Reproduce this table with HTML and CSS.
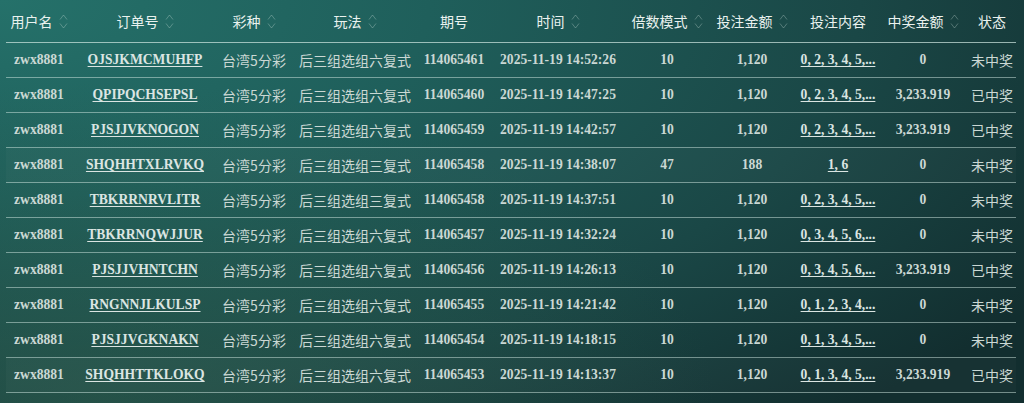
FILE: index.html
```html
<!DOCTYPE html>
<html lang="zh">
<head>
<meta charset="utf-8">
<title>投注记录</title>
<link rel="stylesheet" href="styles.css">
</head>
<body>
<div class="wrap">
<table class="bets">
<colgroup>
<col class="c-user"><col class="c-order"><col class="c-lottery"><col class="c-play"><col class="c-issue"><col class="c-time"><col class="c-mult"><col class="c-amount"><col class="c-content"><col class="c-win"><col class="c-status">
</colgroup>
<thead>
<tr>
<th>用户名<svg class="sort" viewBox="0 0 9 17"><path d="M1 6.5 L4.5 2 L8 6.5 M1 10.5 L4.5 15 L8 10.5"/></svg></th>
<th>订单号<svg class="sort" viewBox="0 0 9 17"><path d="M1 6.5 L4.5 2 L8 6.5 M1 10.5 L4.5 15 L8 10.5"/></svg></th>
<th>彩种<svg class="sort" viewBox="0 0 9 17"><path d="M1 6.5 L4.5 2 L8 6.5 M1 10.5 L4.5 15 L8 10.5"/></svg></th>
<th>玩法<svg class="sort" viewBox="0 0 9 17"><path d="M1 6.5 L4.5 2 L8 6.5 M1 10.5 L4.5 15 L8 10.5"/></svg></th>
<th>期号</th>
<th>时间<svg class="sort" viewBox="0 0 9 17"><path d="M1 6.5 L4.5 2 L8 6.5 M1 10.5 L4.5 15 L8 10.5"/></svg></th>
<th>倍数模式<svg class="sort" viewBox="0 0 9 17"><path d="M1 6.5 L4.5 2 L8 6.5 M1 10.5 L4.5 15 L8 10.5"/></svg></th>
<th>投注金额<svg class="sort" viewBox="0 0 9 17"><path d="M1 6.5 L4.5 2 L8 6.5 M1 10.5 L4.5 15 L8 10.5"/></svg></th>
<th>投注内容</th>
<th>中奖金额<svg class="sort" viewBox="0 0 9 17"><path d="M1 6.5 L4.5 2 L8 6.5 M1 10.5 L4.5 15 L8 10.5"/></svg></th>
<th>状态</th>
</tr>
</thead>
<tbody>
<tr><td class="num">zwx8881</td><td class="num"><a class="link">OJSJKMCMUHFP</a></td><td class="cn">台湾5分彩</td><td class="cn">后三组选组六复式</td><td class="num">114065461</td><td class="num">2025-11-19 14:52:26</td><td class="num">10</td><td class="num">1,120</td><td class="num"><a class="link">0, 2, 3, 4, 5,...</a></td><td class="num">0</td><td class="cn">未中奖</td></tr>
<tr><td class="num">zwx8881</td><td class="num"><a class="link">QPIPQCHSEPSL</a></td><td class="cn">台湾5分彩</td><td class="cn">后三组选组六复式</td><td class="num">114065460</td><td class="num">2025-11-19 14:47:25</td><td class="num">10</td><td class="num">1,120</td><td class="num"><a class="link">0, 2, 3, 4, 5,...</a></td><td class="num">3,233.919</td><td class="cn">已中奖</td></tr>
<tr><td class="num">zwx8881</td><td class="num"><a class="link">PJSJJVKNOGON</a></td><td class="cn">台湾5分彩</td><td class="cn">后三组选组六复式</td><td class="num">114065459</td><td class="num">2025-11-19 14:42:57</td><td class="num">10</td><td class="num">1,120</td><td class="num"><a class="link">0, 2, 3, 4, 5,...</a></td><td class="num">3,233.919</td><td class="cn">已中奖</td></tr>
<tr class="hl"><td class="num">zwx8881</td><td class="num"><a class="link">SHQHHTXLRVKQ</a></td><td class="cn">台湾5分彩</td><td class="cn">后三组选组三复式</td><td class="num">114065458</td><td class="num">2025-11-19 14:38:07</td><td class="num">47</td><td class="num">188</td><td class="num"><a class="link">1, 6</a></td><td class="num">0</td><td class="cn">未中奖</td></tr>
<tr><td class="num">zwx8881</td><td class="num"><a class="link">TBKRRNRVLITR</a></td><td class="cn">台湾5分彩</td><td class="cn">后三组选组三复式</td><td class="num">114065458</td><td class="num">2025-11-19 14:37:51</td><td class="num">10</td><td class="num">1,120</td><td class="num"><a class="link">0, 2, 3, 4, 5,...</a></td><td class="num">0</td><td class="cn">未中奖</td></tr>
<tr><td class="num">zwx8881</td><td class="num"><a class="link">TBKRRNQWJJUR</a></td><td class="cn">台湾5分彩</td><td class="cn">后三组选组六复式</td><td class="num">114065457</td><td class="num">2025-11-19 14:32:24</td><td class="num">10</td><td class="num">1,120</td><td class="num"><a class="link">0, 3, 4, 5, 6,...</a></td><td class="num">0</td><td class="cn">未中奖</td></tr>
<tr><td class="num">zwx8881</td><td class="num"><a class="link">PJSJJVHNTCHN</a></td><td class="cn">台湾5分彩</td><td class="cn">后三组选组六复式</td><td class="num">114065456</td><td class="num">2025-11-19 14:26:13</td><td class="num">10</td><td class="num">1,120</td><td class="num"><a class="link">0, 3, 4, 5, 6,...</a></td><td class="num">3,233.919</td><td class="cn">已中奖</td></tr>
<tr><td class="num">zwx8881</td><td class="num"><a class="link">RNGNNJLKULSP</a></td><td class="cn">台湾5分彩</td><td class="cn">后三组选组六复式</td><td class="num">114065455</td><td class="num">2025-11-19 14:21:42</td><td class="num">10</td><td class="num">1,120</td><td class="num"><a class="link">0, 1, 2, 3, 4,...</a></td><td class="num">0</td><td class="cn">未中奖</td></tr>
<tr><td class="num">zwx8881</td><td class="num"><a class="link">PJSJJVGKNAKN</a></td><td class="cn">台湾5分彩</td><td class="cn">后三组选组六复式</td><td class="num">114065454</td><td class="num">2025-11-19 14:18:15</td><td class="num">10</td><td class="num">1,120</td><td class="num"><a class="link">0, 1, 3, 4, 5,...</a></td><td class="num">0</td><td class="cn">未中奖</td></tr>
<tr class="hl"><td class="num">zwx8881</td><td class="num"><a class="link">SHQHHTTKLOKQ</a></td><td class="cn">台湾5分彩</td><td class="cn">后三组选组六复式</td><td class="num">114065453</td><td class="num">2025-11-19 14:13:37</td><td class="num">10</td><td class="num">1,120</td><td class="num"><a class="link">0, 1, 3, 4, 5,...</a></td><td class="num">3,233.919</td><td class="cn">已中奖</td></tr>
</tbody>
</table>
</div>
</body>
</html>
```

FILE: styles.css
```css
html, body {
  margin: 0;
  height: 403px;
  overflow: hidden;
}
body {
  background:
    radial-gradient(ellipse 60% 80% at 10% 100%, rgba(50, 95, 75, 0.45) 0%, rgba(50, 95, 75, 0) 100%),
    radial-gradient(ellipse 120% 140% at 0% 0%, #25716a 0%, #1f5f5b 35%, #1a4746 70%, #122e2f 100%);
  font-family: "Noto Sans CJK SC", "Noto Sans", sans-serif;
}
.wrap {
  padding-left: 6px;
}
.bets {
  width: 1010px;
  table-layout: fixed;
  border-collapse: separate;
  border-spacing: 0;
}
.c-user { width: 66px; }
.c-order { width: 146px; }
.c-lottery { width: 72px; }
.c-play { width: 130px; }
.c-issue { width: 68px; }
.c-time { width: 140px; }
.c-mult { width: 78px; }
.c-amount { width: 92px; }
.c-content { width: 80px; }
.c-win { width: 90px; }
.c-status { width: 48px; }

.bets th {
  height: 42px;
  padding: 0;
  font-weight: 400;
  font-size: 14px;
  color: #eaf2ef;
  text-align: center;
  white-space: nowrap;
  vertical-align: middle;
  border-bottom: 1px solid rgba(210, 232, 226, 0.7);
}
.sort {
  width: 9px;
  height: 17px;
  margin-left: 6px;
  vertical-align: -3px;
}
.sort path {
  fill: none;
  stroke: rgba(220, 235, 230, 0.3);
  stroke-width: 1;
}
.bets td {
  height: 34px;
  padding: 0;
  text-align: center;
  white-space: nowrap;
  vertical-align: middle;
  border-bottom: 1px solid rgba(210, 232, 226, 0.5);
  color: #cbd8d4;
}
.bets tr.hl td {
  background: rgba(255, 255, 255, 0.025);
}
.num {
  font-family: "Liberation Serif", serif;
  font-weight: 700;
  font-size: 13.6px;
}
.cn {
  font-family: "Noto Sans CJK SC", sans-serif;
  font-size: 14px;
  font-weight: 400;
  color: #c4d3cf;
}
.link {
  color: #dbe5e2;
  text-decoration: underline;
  text-underline-offset: 2px;
}
```
